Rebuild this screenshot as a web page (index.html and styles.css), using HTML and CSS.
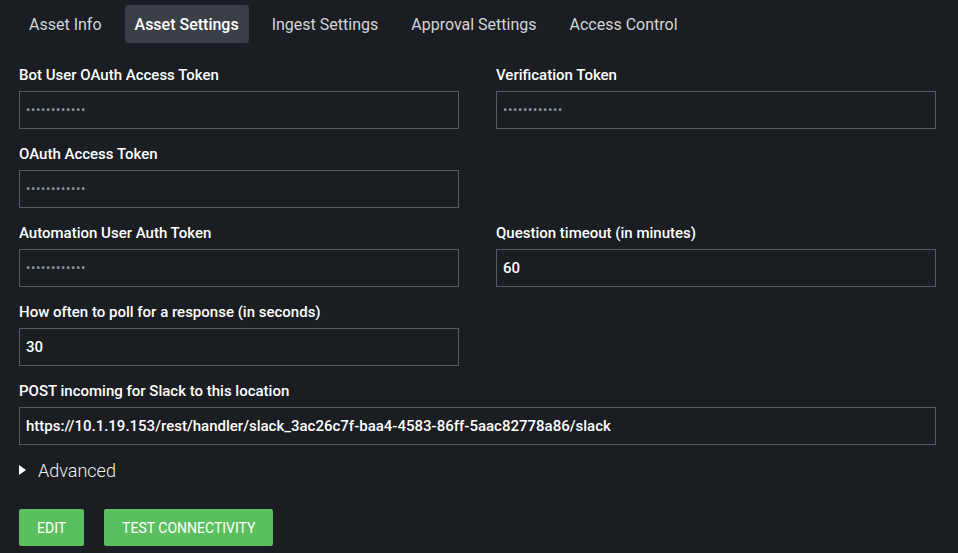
FILE: index.html
```html
<!DOCTYPE html>
<html lang="en">
<head>
<meta charset="utf-8">
<title>Asset Settings</title>
<link rel="stylesheet" href="styles.css">
</head>
<body>
<nav class="tabs">
  <a class="tab">Asset Info</a>
  <a class="tab active">Asset Settings</a>
  <a class="tab">Ingest Settings</a>
  <a class="tab">Approval Settings</a>
  <a class="tab">Access Control</a>
</nav>
<form class="form">
  <div class="group">
    <label class="label">Bot User OAuth Access Token</label>
    <div class="field mask">••••••••••••</div>
  </div>
  <div class="group">
    <label class="label">Verification Token</label>
    <div class="field mask">••••••••••••</div>
  </div>
  <div class="group">
    <label class="label">OAuth Access Token</label>
    <div class="field mask">••••••••••••</div>
  </div>
  <div class="group empty"></div>
  <div class="group">
    <label class="label">Automation User Auth Token</label>
    <div class="field mask">••••••••••••</div>
  </div>
  <div class="group">
    <label class="label">Question timeout (in minutes)</label>
    <div class="field">60</div>
  </div>
  <div class="group">
    <label class="label">How often to poll for a response (in seconds)</label>
    <div class="field">30</div>
  </div>
  <div class="group empty"></div>
  <div class="group wide">
    <label class="label">POST incoming for Slack to this location</label>
    <div class="field">https://10.1.19.153/rest/handler/slack_3ac26c7f-baa4-4583-86ff-5aac82778a86/slack</div>
  </div>
</form>
<div class="advanced">
  <span class="caret"></span>
  <span>Advanced</span>
</div>
<div class="actions">
  <button class="btn">EDIT</button>
  <button class="btn">TEST CONNECTIVITY</button>
</div>
</body>
</html>
```
FILE: styles.css
```css
html, body {
  margin: 0;
  padding: 0;
  background: #1a1d21;
  color: #ffffff;
  font-family: Roboto, "Liberation Sans", sans-serif;
}
body {
  width: 958px;
  height: 553px;
  overflow: hidden;
}
.tabs {
  display: flex;
  gap: 13px;
  padding: 5px 0 0 19px;
}
.tab {
  display: block;
  height: 38px;
  line-height: 39px;
  padding: 0 10px;
  font-size: 16px;
  color: #d2d5d9;
  border-radius: 4px;
}
.tab.active {
  background: #3b4048;
  color: #ffffff;
  font-weight: 500;
}
.form {
  display: grid;
  grid-template-columns: 440px 440px;
  column-gap: 37px;
  row-gap: 16px;
  padding: 23px 0 0 19px;
  margin: 0;
}
.group {
  display: flex;
  flex-direction: column;
  gap: 7px;
}
.group.wide {
  grid-column: 1 / 3;
}
.label {
  font-size: 15px;
  font-weight: 500;
  line-height: 18px;
  color: #ffffff;
}
.field {
  box-sizing: border-box;
  height: 38px;
  border: 1px solid #565b64;
  padding: 0 6px;
  font-size: 15px;
  font-weight: 500;
  line-height: 36px;
  color: #ffffff;
  white-space: nowrap;
}
.field.mask {
  color: #8c919a;
  font-size: 12px;
  letter-spacing: 0.8px;
}
.advanced {
  display: flex;
  align-items: center;
  gap: 12px;
  padding: 13px 0 0 19px;
  height: 24px;
  font-size: 18px;
  font-weight: 300;
  color: #f0f0f0;
}
.caret {
  width: 0;
  height: 0;
  border-top: 5px solid transparent;
  border-bottom: 5px solid transparent;
  border-left: 7px solid #ffffff;
}
.actions {
  display: flex;
  gap: 20px;
  padding: 27px 0 0 19px;
}
.btn {
  height: 37px;
  padding: 0 18px;
  border: none;
  border-radius: 2px;
  background: #5bbf5f;
  color: #ffffff;
  font-family: Roboto, "Liberation Sans", sans-serif;
  font-size: 14px;
  font-weight: 400;
}
```
